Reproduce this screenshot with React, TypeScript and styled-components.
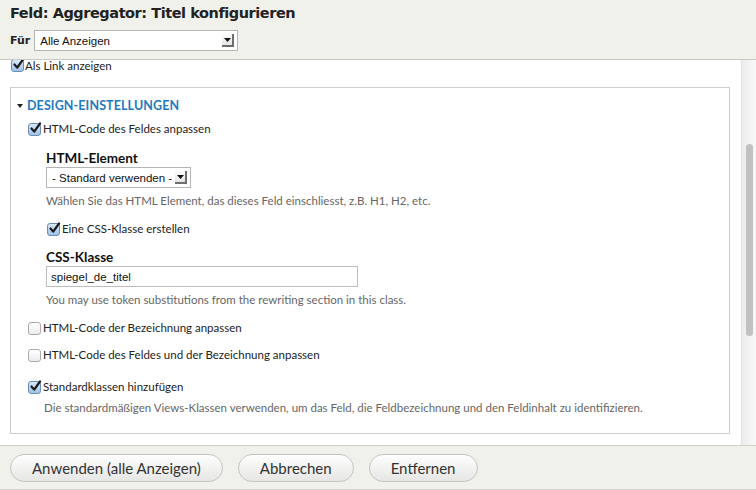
import styled, { createGlobalStyle } from 'styled-components';

const GlobalStyle = createGlobalStyle`
  html, body {
    margin: 0;
    padding: 0;
    background: #fff;
  }
  body {
    font-family: Lato, "Open Sans", sans-serif;
    color: #333;
  }
`;

function Check({ checked }: { checked: boolean }) {
  return (
    <CheckBox $checked={checked}>
      {checked && (
        <svg width="13" height="13" viewBox="0 0 13 13">
          <path
            d="M2.5 6.5 L5.2 9.6 L11 1.5"
            fill="none"
            stroke="#1a1a1a"
            strokeWidth="2.2"
            strokeLinecap="round"
            strokeLinejoin="round"
          />
        </svg>
      )}
    </CheckBox>
  );
}

function Select({ value, width }: { value: string; width: number }) {
  return (
    <SelectBox style={{ width }}>
      <SelectText>{value}</SelectText>
      <SelectArrow>
        <svg width="7" height="4" viewBox="0 0 7 4">
          <path d="M0 0 H7 L3.5 4 Z" fill="#111" />
        </svg>
      </SelectArrow>
    </SelectBox>
  );
}

export default function App() {
  return (
    <Page>
      <GlobalStyle />
      <Header>
        <Title>Feld: Aggregator: Titel konfigurieren</Title>
        <ForRow>
          <ForLabel>Für</ForLabel>
          <Select value="Alle Anzeigen" width={204} />
        </ForRow>
      </Header>
      <Body>
        <Scroll>
          <TopCheck>
            <Check checked />
            <CheckLabel>Als Link anzeigen</CheckLabel>
          </TopCheck>
          <Fieldset>
            <Legend>
              <Triangle />
              DESIGN-EINSTELLUNGEN
            </Legend>
            <CheckRow $gap={7}>
              <Check checked />
              <CheckLabel>HTML-Code des Feldes anpassen</CheckLabel>
            </CheckRow>
            <Nested>
              <FieldLabel $top={13}>HTML-Element</FieldLabel>
              <Select value="- Standard verwenden -" width={145} />
              <Description>
                Wählen Sie das HTML Element, das dieses Feld einschliesst, z.B. H1, H2, etc.
              </Description>
              <CheckRow $gap={13} $indent={1}>
                <Check checked />
                <CheckLabel>Eine CSS-Klasse erstellen</CheckLabel>
              </CheckRow>
              <FieldLabel $top={12}>CSS-Klasse</FieldLabel>
              <TextInput>spiegel_de_titel</TextInput>
              <Description>
                You may use token substitutions from the rewriting section in this class.
              </Description>
            </Nested>
            <CheckRow $gap={13}>
              <Check checked={false} />
              <CheckLabel>HTML-Code der Bezeichnung anpassen</CheckLabel>
            </CheckRow>
            <CheckRow $gap={11}>
              <Check checked={false} />
              <CheckLabel>HTML-Code des Feldes und der Bezeichnung anpassen</CheckLabel>
            </CheckRow>
            <CheckRow $gap={16}>
              <Check checked />
              <CheckLabel>Standardklassen hinzufügen</CheckLabel>
            </CheckRow>
            <Description $indent={27} $top={5}>
              Die standardmäßigen Views-Klassen verwenden, um das Feld, die Feldbezeichnung und den
              Feldinhalt zu identifizieren.
            </Description>
          </Fieldset>
        </Scroll>
        <ScrollTrack>
          <ScrollThumb />
        </ScrollTrack>
      </Body>
      <Footer>
        <Button>Anwenden (alle Anzeigen)</Button>
        <Button>Abbrechen</Button>
        <Button>Entfernen</Button>
      </Footer>
    </Page>
  );
}

const Page = styled.div`
  width: 756px;
  height: 490px;
  display: flex;
  flex-direction: column;
  overflow: hidden;
`;

const Header = styled.div`
  height: 60px;
  box-sizing: border-box;
  background: #f1f1ec;
  border-bottom: 1px solid #c8c8c4;
  padding: 4px 10px 0;
`;

const Title = styled.h1`
  margin: 0;
  font-family: "DejaVu Sans", sans-serif;
  font-size: 14.5px;
  font-weight: 700;
  color: #222;
  letter-spacing: -0.45px;
  line-height: 18px;
`;

const ForRow = styled.div`
  display: flex;
  align-items: center;
  gap: 4px;
  margin-top: 8px;
`;

const ForLabel = styled.span`
  font-family: "DejaVu Sans", sans-serif;
  font-size: 11px;
  font-weight: 700;
  color: #222;
`;

const SelectBox = styled.div`
  height: 21px;
  box-sizing: border-box;
  background: #fff;
  border: 1px solid #b5b5b5;
  display: flex;
  align-items: center;
  justify-content: space-between;
  padding: 0 3px 0 5px;
`;

const SelectText = styled.span`
  font-family: "Liberation Sans", Arial, sans-serif;
  font-size: 11.5px;
  color: #111;
  white-space: nowrap;
`;

const SelectArrow = styled.span`
  width: 12px;
  height: 13px;
  display: flex;
  align-items: center;
  justify-content: center;
  background: linear-gradient(#fdfdfd, #e4e4e4);
  border-right: 2px solid #6d6d6d;
  border-bottom: 2px solid #6d6d6d;
  box-sizing: border-box;
  padding-left: 1px;
`;

const Body = styled.div`
  flex: 1;
  display: flex;
  min-height: 0;
  border-bottom: 1px solid #cfcfcb;
`;

const Scroll = styled.div`
  flex: 1;
  padding: 0 11px 0 10px;
  overflow: hidden;
`;

const TopCheck = styled.div`
  display: flex;
  align-items: center;
  gap: 1px;
  height: 16px;
  margin-top: -3px;
  padding-left: 1px;
`;

const Fieldset = styled.div`
  margin-top: 14px;
  border: 1px solid #cdcdcd;
  padding: 10px 16px 18px 6px;
`;

const Legend = styled.div`
  display: flex;
  align-items: center;
  gap: 4px;
  font-size: 12.5px;
  font-weight: 700;
  color: #1f7ac0;
  letter-spacing: 0.1px;
  line-height: 16px;
`;

const Triangle = styled.span`
  width: 0;
  height: 0;
  border-left: 3.5px solid transparent;
  border-right: 3.5px solid transparent;
  border-top: 4px solid #222;
`;

const CheckRow = styled.div<{ $gap: number; $indent?: number }>`
  display: flex;
  align-items: center;
  gap: 2px;
  margin-top: ${(p) => p.$gap}px;
  padding-left: ${(p) => p.$indent ?? 11}px;
  line-height: 16px;
`;

const CheckBox = styled.span<{ $checked: boolean }>`
  width: 13px;
  height: 13px;
  box-sizing: border-box;
  border-radius: 3px;
  border: 1px solid ${(p) => (p.$checked ? '#6b8db5' : '#a9a9a9')};
  background: ${(p) =>
    p.$checked
      ? 'linear-gradient(#d8e8f8, #9fc3e8)'
      : 'linear-gradient(#ffffff, #ececec)'};
  display: inline-flex;
  align-items: center;
  justify-content: center;
  position: relative;
  flex-shrink: 0;
  svg {
    position: absolute;
    top: -2px;
    left: 0;
  }
`;

const CheckLabel = styled.span`
  font-size: 11.5px;
  color: #222;
  white-space: nowrap;
`;

const Nested = styled.div`
  padding-left: 29px;
`;

const FieldLabel = styled.div<{ $top: number }>`
  margin-top: ${(p) => p.$top}px;
  font-size: 13.5px;
  font-weight: 700;
  color: #111;
  line-height: 16px;
  margin-bottom: 1px;
`;

const Description = styled.div<{ $indent?: number; $top?: number }>`
  margin-top: ${(p) => p.$top ?? 5}px;
  padding-left: ${(p) => p.$indent ?? 0}px;
  font-size: 11.5px;
  color: #666;
  line-height: 15px;
  white-space: nowrap;
`;

const TextInput = styled.div`
  width: 312px;
  height: 21px;
  box-sizing: border-box;
  border: 1px solid #bdbdbd;
  padding: 0 4px;
  display: flex;
  align-items: center;
  font-family: "Liberation Sans", Arial, sans-serif;
  font-size: 11.5px;
  color: #111;
`;

const ScrollTrack = styled.div`
  width: 15px;
  box-sizing: border-box;
  background: linear-gradient(90deg, #ececec, #f8f8f8);
  border-left: 1px solid #e3e3e3;
  padding: 84px 3px 0 4px;
`;

const ScrollThumb = styled.div`
  height: 192px;
  background: #c1c1c1;
  border-radius: 4px;
`;

const Footer = styled.div`
  height: 44px;
  box-sizing: border-box;
  background: #f1f1ec;
  border-bottom: 1px solid #d5d5d0;
  display: flex;
  align-items: center;
  gap: 15px;
  padding: 0 10px;
`;

const Button = styled.button`
  height: 28px;
  padding: 0 21px;
  border-radius: 14px;
  border: 1px solid #c4c4c0;
  background: linear-gradient(#fefefe, #e6e6e4);
  font-family: Lato, "Open Sans", sans-serif;
  font-size: 15px;
  color: #333;
  cursor: pointer;
`;
